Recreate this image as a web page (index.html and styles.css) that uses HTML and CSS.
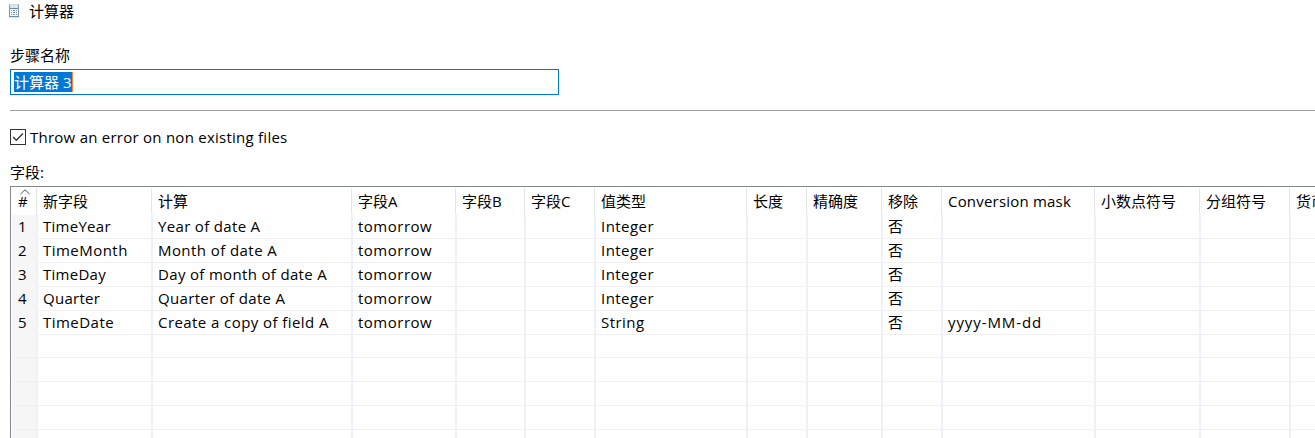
FILE: index.html
```html
<!DOCTYPE html>
<html lang="zh-CN">
<head>
<meta charset="utf-8">
<title>计算器</title>
<link rel="stylesheet" href="styles.css">
</head>
<body>
<header class="titlebar">
  <svg class="app-icon" width="10" height="14" viewBox="0 0 10 14" shape-rendering="crispEdges">
    <rect width="10" height="14" fill="#dde6ee"/>
    <path d="M0 0h10v1H0z" fill="#d5d8db"/>
    <path d="M0 1h1v12H0zM9 1h1v12H9z" fill="#8499ad"/>
    <path d="M1 4h8v1H1zM0 12h10v1H0z" fill="#6f8ba6"/>
    <path d="M1 5h8v7H1z" fill="#f4f8fb"/>
    <path d="M2 6h1v1H2zM4 6h2v1H4zM7 6h1v1H7zM2 8h1v1H2zM4 8h2v1H4zM7 8h1v1H7zM2 10h1v1H2zM4 10h2v1H4zM7 10h1v1H7z" fill="#7c94ac"/>
  </svg>
  <span>计算器</span>
</header>
<main class="form">
  <label class="name-label">步骤名称</label>
  <div class="name-input"><span class="selected">计算器 3</span></div>
  <div class="rule"></div>
  <div class="check-row">
    <svg class="checkbox" width="16" height="16" viewBox="0 0 16 16"><rect x=".5" y=".5" width="15" height="15" fill="#fff" stroke="#333"/><path d="M3 8l3.300 3.300L13 4.500" fill="none" stroke="#333" stroke-width="1.300"/></svg>
    <span class="check-text">Throw an error on non existing files</span>
  </div>
  <label class="fields-label">字段:</label>
  <section class="table">
    <div class="row head">
      <div class="num"><svg class="sort" width="10" height="6" viewBox="0 0 10 6"><path d="M.5 5L5 .8L9.500 5" fill="none" stroke="#555"/></svg>#</div><div>新字段</div><div>计算</div><div>字段A</div><div>字段B</div><div>字段C</div><div>值类型</div><div>长度</div><div>精确度</div><div>移除</div><div class="mask-title">Conversion mask</div><div>小数点符号</div><div>分组符号</div><div>货币符号</div>
    </div>
    <div class="row"><div class="num">1</div><div class="field tight">TimeYear</div><div class="calc">Year of date A</div><div class="source">tomorrow</div><div></div><div></div><div class="type">Integer</div><div></div><div></div><div>否</div><div></div><div></div><div></div><div></div></div>
    <div class="row"><div class="num">2</div><div class="field">TimeMonth</div><div class="calc wide">Month of date A</div><div class="source">tomorrow</div><div></div><div></div><div class="type">Integer</div><div></div><div></div><div>否</div><div></div><div></div><div></div><div></div></div>
    <div class="row"><div class="num">3</div><div class="field tight">TimeDay</div><div class="calc">Day of month of date A</div><div class="source">tomorrow</div><div></div><div></div><div class="type">Integer</div><div></div><div></div><div>否</div><div></div><div></div><div></div><div></div></div>
    <div class="row"><div class="num">4</div><div class="field tight">Quarter</div><div class="calc">Quarter of date A</div><div class="source">tomorrow</div><div></div><div></div><div class="type">Integer</div><div></div><div></div><div>否</div><div></div><div></div><div></div><div></div></div>
    <div class="row"><div class="num">5</div><div class="field">TimeDate</div><div class="calc wide">Create a copy of field A</div><div class="source">tomorrow</div><div></div><div></div><div class="type">String</div><div></div><div></div><div>否</div><div class="mask">yyyy-MM-dd</div><div></div><div></div><div></div></div>
    <div class="row"><div class="num"></div><div></div><div></div><div></div><div></div><div></div><div></div><div></div><div></div><div></div><div></div><div></div><div></div><div></div></div>
    <div class="row"><div class="num"></div><div></div><div></div><div></div><div></div><div></div><div></div><div></div><div></div><div></div><div></div><div></div><div></div><div></div></div>
    <div class="row"><div class="num"></div><div></div><div></div><div></div><div></div><div></div><div></div><div></div><div></div><div></div><div></div><div></div><div></div><div></div></div>
    <div class="row"><div class="num"></div><div></div><div></div><div></div><div></div><div></div><div></div><div></div><div></div><div></div><div></div><div></div><div></div><div></div></div>
    <div class="row"><div class="num"></div><div></div><div></div><div></div><div></div><div></div><div></div><div></div><div></div><div></div><div></div><div></div><div></div><div></div></div>
  </section>
</main>
</body>
</html>
```
FILE: styles.css
```css
* { box-sizing: border-box; }
body {
  margin: 0;
  height: 438px;
  overflow: hidden;
  background: #fff;
  color: #000;
  font: 15px/20px "Open Sans", "Noto Sans CJK SC", sans-serif;
  white-space: nowrap;
}
.titlebar { display: flex; gap: 10px; height: 44px; padding: 1px 0 0 9px; }
.app-icon { margin-top: 3px; }
.form { display: flex; flex-direction: column; padding-left: 10px; }
.name-label { height: 25px; padding-top: 1px; }
.name-input {
  width: 549px;
  height: 26px;
  padding: 2px 3px;
  border: 1px solid #0078d7;
}
.selected {
  display: inline-block;
  width: 59px;
  height: 20px;
  border-right: 1px solid #ff8728;
  background: #0078d7;
  color: #fff;
}
.rule { height: 1px; margin: 15px 0 16px; background: #a0a0a0; }
.check-row { display: flex; gap: 4px; height: 35px; }
.check-text { letter-spacing: 0.25px; }
.checkbox { margin-top: 2px; }
.fields-label { height: 24px; }
.table {
  height: 252px;
  overflow: hidden;
  border-top: 1px solid #828790;
  border-left: 1px solid #828790;
}
.row {
  display: grid;
  grid-template-columns: 27px 115px 200px 104px 69px 70px 152px 60px 75px 60px 153px 105px 90px 100px;
  height: 24px;
  line-height: 25px;
}
.row > div {
  padding-left: 5px;
  border-right: 2px solid #edf1f9;
  box-shadow: inset 0 -1px #f0f0f0;
}
.row > .num { padding-left: 6px; background: #f6f6f6; background-clip: padding-box; border-left: 1px solid #fff; }
.field { letter-spacing: 0.47px; }
.tight { letter-spacing: 0.27px; }
.calc { letter-spacing: 0.33px; }
.wide { letter-spacing: 0.43px; }
.source { letter-spacing: 0.5px; }
.type { letter-spacing: 0.45px; }
.mask { letter-spacing: 0.9px; }
.mask-title { letter-spacing: 0.2px; }
.head {
  grid-template-columns: 26px 115px 200px 104px 69px 70px 152px 60px 75px 60px 153px 105px 90px 100px;
  height: 27px;
  padding-top: 1px;
  line-height: 27px;
}
.head > div { padding-left: 6px; border-right: 1px solid #e5e5e5; box-shadow: none; }
.head > .num { position: relative; padding-left: 6px; background: #fff; }
.sort { position: absolute; left: 8px; top: 1px; }
```
